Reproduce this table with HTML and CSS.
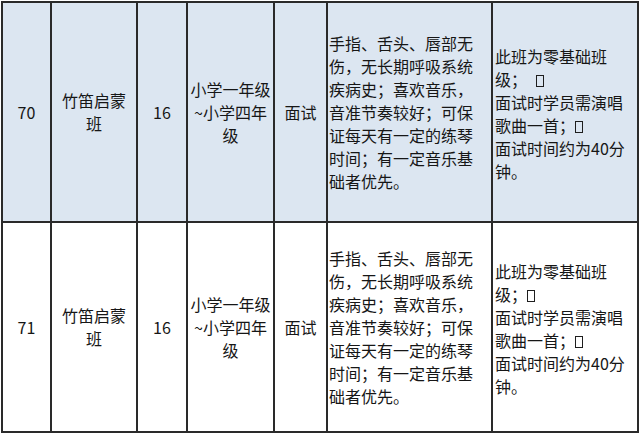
FILE: index.html
```html
<!DOCTYPE html>
<html lang="zh-CN">
<head>
<meta charset="utf-8">
<title>竹笛启蒙班</title>
<link rel="stylesheet" href="styles.css">
</head>
<body>
<div class="sheet">
  <div class="cell row-a c-center"><div class="txt">70</div></div>
  <div class="cell row-a c-center"><div class="txt">竹笛启蒙<br>班</div></div>
  <div class="cell row-a c-center"><div class="txt">16</div></div>
  <div class="cell row-a c-center"><div class="txt">小学一年级<br>~小学四年<br>级</div></div>
  <div class="cell row-a c-center"><div class="txt">面试</div></div>
  <div class="cell row-a c-left c-req"><div class="txt">手指、舌头、唇部无<br>伤，无长期呼吸系统<br>疾病史；喜欢音乐，<br>音准节奏较好；可保<br>证每天有一定的练琴<br>时间；有一定音乐基<br>础者优先。</div></div>
  <div class="cell row-a c-left c-note"><div class="txt">此班为零基础班<br>级；<span class="tofu wide"></span><br>面试时学员需演唱<br>歌曲一首；<span class="tofu"></span><br>面试时间约为40分<br>钟。</div></div>

  <div class="cell row-b c-center"><div class="txt">71</div></div>
  <div class="cell row-b c-center"><div class="txt">竹笛启蒙<br>班</div></div>
  <div class="cell row-b c-center"><div class="txt">16</div></div>
  <div class="cell row-b c-center"><div class="txt">小学一年级<br>~小学四年<br>级</div></div>
  <div class="cell row-b c-center"><div class="txt">面试</div></div>
  <div class="cell row-b c-left c-req"><div class="txt">手指、舌头、唇部无<br>伤，无长期呼吸系统<br>疾病史；喜欢音乐，<br>音准节奏较好；可保<br>证每天有一定的练琴<br>时间；有一定音乐基<br>础者优先。</div></div>
  <div class="cell row-b c-left c-note"><div class="txt">此班为零基础班<br>级；<span class="tofu"></span><br>面试时学员需演唱<br>歌曲一首；<span class="tofu"></span><br>面试时间约为40分<br>钟。</div></div>
</div>
</body>
</html>
```

FILE: styles.css
```css
html, body {
  margin: 0;
  padding: 0;
  background: #ffffff;
}

body {
  font-family: "Noto Sans CJK SC", "Noto Sans", "Liberation Sans", sans-serif;
  font-size: 16px;
  line-height: 23px;
  color: #161616;
}

.sheet {
  margin: 1px 0 0 1px;
  width: 638px;
  box-sizing: border-box;
  display: grid;
  grid-template-columns: 49px 86px 50px 87px 53px 165px 146px;
  grid-template-rows: 220px 210px;
  border-left: 2px solid #2a2a2a;
  border-top: 2px solid #2a2a2a;
}

.cell {
  box-sizing: border-box;
  border-right: 2px solid #2a2a2a;
  border-bottom: 2px solid #2a2a2a;
  display: flex;
  flex-direction: column;
  justify-content: center;
  white-space: nowrap;
  overflow: hidden;
}

.row-a { background: #dce6f1; }
.row-b { background: #ffffff; }

.c-center {
  align-items: center;
  text-align: center;
}

.c-left {
  align-items: flex-start;
  text-align: left;
}

.c-req { padding-left: 1px; }
.c-note { padding-left: 2px; padding-top: 4px; }

.tofu {
  display: inline-block;
  width: 8px;
  height: 12px;
  box-sizing: border-box;
  border: 1.5px solid #1e1e1e;
  vertical-align: -1px;
}

.tofu.wide { margin-left: 9px; }
```
